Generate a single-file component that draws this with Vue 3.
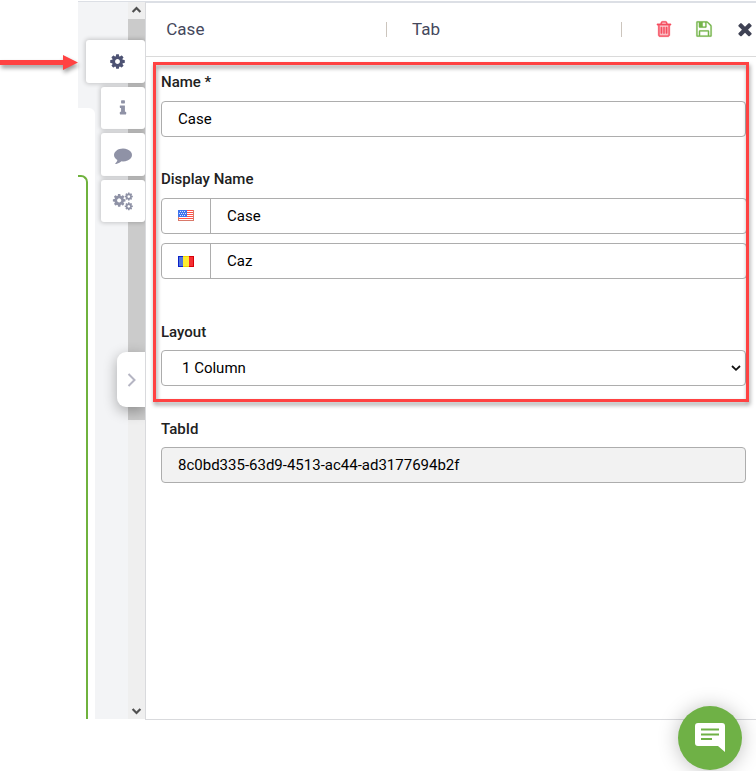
<script setup>
const gear = 'M1152 896q0-106-75-181t-181-75-181 75-75 181 75 181 181 75 181-75 75-181zm512-109v222q0 12-8 23t-20 13l-185 28q-19 54-39 91 35 50 107 138 10 12 10 25t-9 23q-27 37-99 108t-94 71q-12 0-26-9l-138-108q-44 23-91 38-16 136-29 186-7 28-36 28h-222q-14 0-24.5-8.5t-11.5-21.5l-28-184q-49-16-90-37l-141 107q-10 9-25 9-14 0-25-11-126-114-165-168-7-10-7-23 0-12 8-23 15-21 51-66.5t54-70.5q-27-50-41-99l-183-27q-13-2-21-12.5t-8-23.5v-222q0-12 8-23t19-13l186-28q14-46 39-92-40-57-107-138-10-12-10-24 0-10 9-23 26-36 98.5-107.5t94.5-71.5q13 0 26 10l138 107q44-23 91-38 16-136 29-186 7-28 36-28h222q14 0 24.5 8.5t11.5 21.5l28 184q49 16 90 37l142-107q9-9 24-9 13 0 25 10 129 119 165 170 7 8 7 22 0 12-8 23-15 21-51 66.5t-54 70.5q26 50 41 98l183 28q13 2 21 12.5t8 23.5z'
</script>

<template>
  <div class="screen">
    <div class="gutter"></div>
    <div class="workspace">
      <div class="canvas">
        <div class="sheet"><div class="card-edge"></div></div>
      </div>
      <div class="scrollbar">
        <svg class="up" viewBox="0 0 17 17"><path d="M4.6 10 8.500 6l3.900 4" /></svg>
        <div class="thumb"></div>
        <svg class="down" viewBox="0 0 17 17"><path d="M4.6 7l3.900 4 3.900-4" /></svg>
      </div>

      <nav class="side-tabs">
        <div class="side-tab active">
          <svg class="i-gear" viewBox="0 0 1792 1792"><path :d="gear" /></svg>
        </div>
        <div class="side-tab">
          <svg class="i-info" viewBox="0 0 1792 1792"><path d="M1216 1344v128q0 26-19 45t-45 19h-512q-26 0-45-19t-19-45v-128q0-26 19-45t45-19h64v-384h-64q-26 0-45-19t-19-45v-128q0-26 19-45t45-19h384q26 0 45 19t19 45v576h64q26 0 45 19t19 45zm-128-1152v192q0 26-19 45t-45 19h-256q-26 0-45-19t-19-45v-192q0-26 19-45t45-19h256q26 0 45 19t19 45z" /></svg>
        </div>
        <div class="side-tab tall">
          <svg class="i-comment" viewBox="0 0 1792 1792"><path d="M1792 896q0 174-120 321.5t-326 233-450 85.5q-70 0-145-8-198 175-460 242-49 14-114 22-17 2-30.5-9t-17.5-29v-1q-3-4-.5-12t2-10 4.5-9.5l6-9 7-8.5 8-9q7-8 31-34.5t34.5-38 31-39.5 32.5-51 27-59 26-76q-157-89-247.5-220t-90.5-281q0-130 71-248.5t191-204.5 286-136.5 348-50.5q244 0 450 85.5t326 233 120 321.5z" /></svg>
        </div>
        <div class="side-tab">
          <svg class="i-gears" viewBox="0 0 1920 1792">
            <path :d="gear" transform="translate(-120 90) scale(.83)" />
            <path :d="gear" transform="translate(1120 -30) scale(.53)" />
            <path :d="gear" transform="translate(1120 960) scale(.53)" />
          </svg>
        </div>
      </nav>
      <div class="handle"><svg viewBox="0 0 10 14"><path d="M1.500 1l6 6-6 6" /></svg></div>
    </div>

    <main class="panel">
      <header class="head">
        <span class="title">Case</span>
        <span class="kind">Tab</span>
        <div class="tools">
          <svg class="trash" viewBox="0 0 1792 1792"><path class="tint" d="M448 512h896v1024h-896z" /><path d="M704 736v576q0 14-9 23t-23 9h-64q-14 0-23-9t-9-23v-576q0-14 9-23t23-9h64q14 0 23 9t9 23zm256 0v576q0 14-9 23t-23 9h-64q-14 0-23-9t-9-23v-576q0-14 9-23t23-9h64q14 0 23 9t9 23zm256 0v576q0 14-9 23t-23 9h-64q-14 0-23-9t-9-23v-576q0-14 9-23t23-9h64q14 0 23 9t9 23zm128 724v-948h-896v948q0 22 7 40.500t14.500 27 10.500 8.500h832q3 0 10.500-8.500t14.500-27 7-40.500zm-672-1076h448l-48-117q-7-9-17-11h-317q-10 2-17 11zm928 32v64q0 14-9 23t-23 9h-96v948q0 83-47 143.500t-113 60.500h-832q-66 0-113-58.500t-47-141.500v-952h-96q-14 0-23-9t-9-23v-64q0-14 9-23t23-9h309l70-167q15-37 54-63t79-26h320q40 0 79 26t54 63l70 167h309q14 0 23 9t9 23z" /></svg>
          <svg class="save" viewBox="0 0 1792 1792"><path d="M512 1536h768v-384h-768v384zm896 0h128v-896q0-14-10-38.500t-20-34.500l-281-281q-10-10-34-20t-39-10v416q0 40-28 68t-68 28h-576q-40 0-68-28t-28-68v-416h-128v1280h128v-416q0-40 28-68t68-28h832q40 0 68 28t28 68v416zm-384-928v-320q0-13-9.500-22.500t-22.500-9.500h-192q-13 0-22.500 9.500t-9.500 22.500v320q0 13 9.500 22.500t22.500 9.500h192q13 0 22.500-9.500t9.500-22.500zm640 32v928q0 40-28 68t-68 28h-1344q-40 0-68-28t-28-68v-1344q0-40 28-68t68-28h928q40 0 88 20t76 48l280 280q28 28 48 76t20 88z" /></svg>
          <svg class="close" viewBox="0 0 1792 1792"><path d="M1490 1322q0 40-28 68l-136 136q-28 28-68 28t-68-28l-294-294-294 294q-28 28-68 28t-68-28l-136-136q-28-28-28-68t28-68l294-294-294-294q-28-28-28-68t28-68l136-136q28-28 68-28t68 28l294 294 294-294q28-28 68-28t68 28l136 136q28 28 28 68t-28 68l-294 294 294 294q28 28 28 68z" /></svg>
        </div>
      </header>

      <form class="form">
        <section class="group name">
          <label>Name *</label>
          <div class="field">Case</div>
        </section>
        <section class="group display">
          <label>Display Name</label>
          <div class="field">
            <span class="addon us">
              <svg viewBox="0 0 16 11" shape-rendering="crispEdges">
                <path fill="#fff" d="M0 0h16v11H0z" />
                <path fill="#ff5149" d="M0 0h16v1H0zM8 2h8v1H8zM8 4h8v1H8zM0 6h16v1H0zM0 8h16v1H0z" />
                <path fill="#d9796a" d="M0 7h1v4H0zM15 0h1v11h-1zM0 10h16v1H0z" />
                <path fill="#3f74ee" d="M0 0h9v7H0z" />
                <path fill="#d5e4ff" d="M2 1h1v1H2zM4 1h1v1H4zM6 1h1v1H6zM1 3h1v1H1zM3 3h1v1H3zM5 3h1v1H5zM7 3h1v1H7zM2 5h1v1H2zM4 5h1v1H4zM6 5h1v1H6z" />
              </svg>
            </span>
            <span class="value">Case</span>
          </div>
          <div class="field">
            <span class="addon ro">
              <svg viewBox="0 0 16 11" shape-rendering="crispEdges">
                <path fill="#0b20c9" d="M0 0h5v11H0z" />
                <path fill="#5075dc" d="M1 1h4v9H1z" />
                <path fill="#f0d800" d="M5 0h6v11H5z" />
                <path fill="#ffed31" d="M5 1h6v9H5z" />
                <path fill="#d90009" d="M11 0h5v11h-5z" />
                <path fill="#f52f31" d="M11 1h4v9h-4z" />
              </svg>
            </span>
            <span class="value">Caz</span>
          </div>
        </section>
        <section class="group layout">
          <label>Layout</label>
          <div class="field select">
            <span>1 Column</span>
            <svg viewBox="0 0 10 6"><path d="M1 1l4 3.800L9 1" /></svg>
          </div>
        </section>
        <section class="group tabid">
          <label>TabId</label>
          <div class="field readonly">8c0bd335-63d9-4513-ac44-ad3177694b2f</div>
        </section>
      </form>
    </main>

    <div class="highlight"></div>
    <svg class="arrow" viewBox="0 0 84 24"><path d="M0 9h63V4l15 7.500L63 19v-5H0z" /></svg>
    <div class="chat">
      <svg viewBox="0 0 30 29">
        <path fill="#fff" d="M3 0h24q3 0 3 3v26l-7-6H3q-3 0-3-3V3q0-3 3-3z" />
        <path stroke="#6fb146" stroke-width="2" d="M6 6.500h18M6 11.500h18M6 16h11" />
      </svg>
    </div>
  </div>
</template>

<style>
body { margin: 0; background: #fff; overflow: hidden; }
</style>

<style scoped>
* { box-sizing: border-box; }
svg { display: block; flex: none; overflow: visible; }
.screen {
  position: relative;
  display: grid;
  grid-template-columns: 78px 67px 1fr;
  width: 756px;
  height: 771px;
  font-family: Roboto, sans-serif;
  font-size: 15px;
  color: #000;
  overflow: hidden;
}
.workspace {
  position: relative;
  display: flex;
  height: 718px;
  margin-top: 1px;
  background: #f3f4f6;
  border-top: 1px solid #dcdfe5;
}
.canvas { width: 50px; padding-top: 106px; }
.sheet { width: 17px; height: 611px; padding-top: 67px; background: #fff; border-top-right-radius: 6px; }
.card-edge { width: 10px; height: 544px; border: solid #6fb23d; border-width: 2px 2px 0 0; border-top-right-radius: 7px; }
.scrollbar { display: flex; flex-direction: column; width: 17px; height: 717px; background: #efefef; }
.scrollbar svg { width: 17px; height: 17px; fill: none; stroke: #505050; stroke-width: 2.2; }
.thumb { height: 401px; background: #cbcbcb; }
.down { margin-top: auto; }
.side-tabs {
  position: absolute;
  top: 38px;
  right: 0;
  display: flex;
  flex-direction: column;
  align-items: flex-end;
  gap: 4px;
}
.side-tab {
  display: flex;
  align-items: center;
  justify-content: center;
  width: 44.500px;
  height: 42px;
  background: #fff;
  border-radius: 3px;
  box-shadow: 0 0 4px 1px rgba(0, 0, 0, .19);
  clip-path: inset(-6px 0 -6px -6px);
  fill: #8f92a6;
}
.tall { height: 43px; }
.active { width: 59.500px; height: 43px; padding-left: 5px; fill: #4d5273; }
.i-gear { width: 17px; height: 17px; }
.i-info { width: 18px; height: 18px; }
.i-comment { width: 18px; height: 18px; }
.i-gears { width: 19px; height: 18px; }
.handle {
  position: absolute;
  top: 350px;
  right: 0;
  display: flex;
  align-items: center;
  padding: 1px 0 0 10px;
  width: 28px;
  height: 55px;
  background: #fff;
  border-radius: 9px 0 0 9px;
  box-shadow: 0 4px 14px rgba(0, 0, 0, .32);
  clip-path: inset(-20px 0 -24px -20px);
}
.handle svg { width: 10px; height: 14px; fill: none; stroke: #b5b5c3; stroke-width: 2; }
.panel {
  height: 719px;
  margin-top: 1px;
  border: solid #d9dadd;
  border-width: 2px 0 1px 1px;
  border-top-color: #dcdfe5;
  background: #fff;
}
.head {
  display: grid;
  grid-template-columns: 241px 235px 1fr;
  align-items: center;
  height: 54px;
  border-bottom: 1px solid #dadada;
  font-size: 17px;
  line-height: 15px;
  color: #45485c;
}
.title, .kind { height: 15px; border-right: 1px solid #ccc5bd; }
.title { padding-left: 20.300px; }
.kind { padding-left: 25px; }
.tools { display: flex; align-items: center; padding-left: 32.500px; }
.tools svg { position: relative; top: -.5px; }
.trash { width: 18px; height: 18px; fill: #f64e60; stroke: #f64e60; stroke-width: 40; }
.trash .tint { fill: #fbc2c7; stroke: none; }
.save { width: 18px; height: 18px; margin-left: 22px; fill: #74b54a; stroke: #74b54a; stroke-width: 20; }
.close { width: 20px; height: 20px; margin-left: 22px; fill: #3f4254; }
.form { display: flex; flex-direction: column; width: 602px; padding: 16px 0 0 15px; }
label { display: block; height: 18px; margin-bottom: 10px; line-height: 18px; font-weight: 500; color: #212121; }
.field {
  display: flex;
  align-items: center;
  width: 585px;
  height: 36px;
  padding-left: 16px;
  border: 1px solid #adadad;
  border-radius: 4px;
  background: #fff;
}
.display { margin-top: 33px; }
.display .field { width: 586px; padding-left: 0; }
.display .field + .field { margin-top: 9px; }
.addon {
  display: flex;
  align-items: flex-start;
  justify-content: center;
  width: 49px;
  height: 34px;
  border-right: 1px solid #adadad;
}
.us { padding-top: 11px; }
.ro { padding-top: 12px; }
.addon svg { width: 16px; height: 11px; }
.value { padding-left: 16px; }
.layout { margin-top: 44px; }
.layout label, .tabid label { margin-bottom: 9px; }
.select { justify-content: space-between; padding: 0 4px 0 20px; }
.select svg { width: 10px; height: 6px; fill: none; stroke: #111; stroke-width: 1.8; }
.tabid { margin-top: 34px; }
.readonly { background: #f2f2f2; }
.highlight {
  position: absolute;
  left: 153px;
  top: 62px;
  width: 596px;
  height: 340px;
  border: 3px solid #ff4242;
  filter: drop-shadow(1px 3px 2px rgba(0, 0, 0, .4));
}
.arrow { position: absolute; left: 0; top: 51px; width: 84px; height: 24px; fill: #ff4242; filter: drop-shadow(1px 3px 2px rgba(0, 0, 0, .4)); }
.chat {
  position: absolute;
  left: 678px;
  top: 706px;
  display: flex;
  justify-content: center;
  padding-top: 17px;
  width: 64px;
  height: 64px;
  border-radius: 50%;
  background: #6fb146;
  box-shadow: 0 1px 20px rgba(0, 0, 0, .25);
}
.chat svg { width: 30px; height: 29px; }
</style>
